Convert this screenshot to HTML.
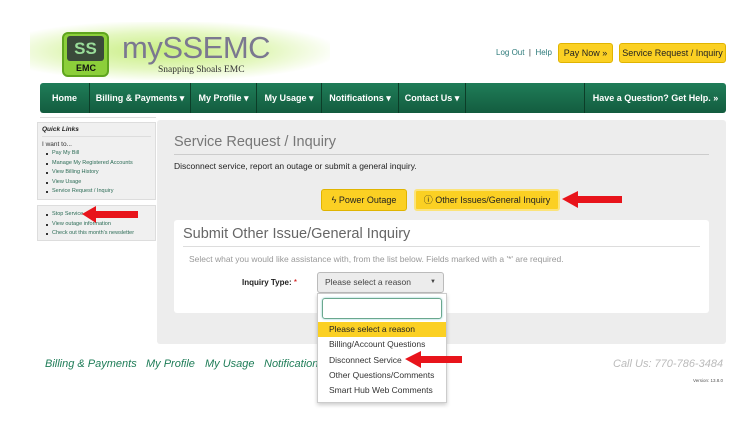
<!DOCTYPE html>
<html><head><meta charset="utf-8"><style>
*{box-sizing:border-box;margin:0;padding:0}
body{width:749px;height:421px;background:#fff;font-family:"Liberation Sans",sans-serif;position:relative;overflow:hidden}
.a{position:absolute}
.nav{left:40px;top:83px;width:686px;height:30px;background:linear-gradient(#1f7d58,#135c3f);border-radius:3px}
.nav span{position:absolute;top:0;height:30px;line-height:30px;color:#fff;font-weight:bold;font-size:9px;text-align:center}
.sep{position:absolute;top:0;width:1px;height:30px;background:#0c3d28}
.btn{background:#fbd023;border:1px solid #e0b400;border-radius:3px;font-size:9px;color:#222;text-align:center}
.lk{font-size:5.5px;color:#2b6b55;line-height:9.5px;padding-left:10px;position:relative}
.lk:before{content:"";position:absolute;left:4px;top:4px;width:2px;height:2px;background:#333}
.dd div{font-size:8.5px;color:#333;height:15.3px;line-height:15.3px;padding-left:11px}
.ft{font-size:11px;font-style:italic;color:#1f7d58}
</style></head><body>
<div class="a" style="left:30px;top:22px;width:300px;height:58px;background:radial-gradient(ellipse at 45% 50%,#c8ee80 0%,#e4f7c0 45%,#fff 75%)"></div>
<div class="a" style="left:62px;top:32px;width:47px;height:45px;background:#8ccf3a;border:2px solid #5fa51e;border-radius:6px"></div>
<div class="a" style="left:67px;top:36px;width:37px;height:25px;background:#3a4a3a;border-radius:3px;color:#9d9;font-weight:bold;font-size:17px;text-align:center;line-height:25px">SS</div>
<div class="a" style="left:66px;top:63px;width:40px;font-weight:bold;font-size:9px;color:#111;text-align:center">EMC</div>
<div class="a" style="left:122px;top:30px;font-size:31px;color:#7b7890;letter-spacing:-0.5px">mySSEMC</div>
<div class="a" style="left:158px;top:65px;font-size:9.5px;color:#333;font-family:'Liberation Serif',serif">Snapping Shoals EMC</div>
<div class="a" style="left:496px;top:48px;font-size:8px;color:#2d7a7a">Log Out <span style="color:#333">&nbsp;|&nbsp;</span> Help</div>
<div class="a btn" style="left:558px;top:43px;width:55px;height:20px;line-height:18px">Pay Now »</div>
<div class="a btn" style="left:619px;top:43px;width:107px;height:20px;line-height:18px">Service Request / Inquiry</div>
<div class="a nav">
<span style="left:0;width:49px">Home</span><div class="sep" style="left:49px"></div>
<span style="left:50px;width:100px">Billing &amp; Payments ▾</span><div class="sep" style="left:150px"></div>
<span style="left:151px;width:65px">My Profile ▾</span><div class="sep" style="left:216px"></div>
<span style="left:217px;width:64px">My Usage ▾</span><div class="sep" style="left:281px"></div>
<span style="left:282px;width:76px">Notifications ▾</span><div class="sep" style="left:358px"></div>
<span style="left:359px;width:66px">Contact Us ▾</span><div class="sep" style="left:425px"></div>
<div class="sep" style="left:544px"></div>
<span style="left:545px;width:141px">Have a Question? Get Help. »</span>
</div>
<div class="a" style="left:40px;top:117px;width:116px;height:1px;background:#ddd"></div>
<div class="a" style="left:37px;top:122px;width:119px;height:78px;background:#f0f0f0;border:1px solid #ddd;padding:3px 4px">
<div style="font-size:6.5px;font-weight:bold;font-style:italic;color:#222;border-bottom:1px solid #ddd;padding-bottom:3px;margin-bottom:4px">Quick Links</div>
<div style="font-size:6.5px;color:#333;margin-bottom:1px">I want to...</div>
<div class="lk">Pay My Bill</div><div class="lk">Manage My Registered Accounts</div><div class="lk">View Billing History</div><div class="lk">View Usage</div><div class="lk">Service Request / Inquiry</div>
</div>
<div class="a" style="left:37px;top:205px;width:119px;height:36px;background:#f0f0f0;border:1px solid #ddd;padding:4px 4px">
<div class="lk">Stop Service</div><div class="lk">View outage information</div><div class="lk">Check out this month's newsletter</div>
</div>
<div class="a" style="left:157px;top:120px;width:569px;height:224px;background:#ededed;border-radius:3px"></div>
<div class="a" style="left:174px;top:134px;font-size:14.5px;color:#777">Service Request / Inquiry</div>
<div class="a" style="left:174px;top:154px;width:535px;height:1px;background:#ccc"></div>
<div class="a" style="left:174px;top:161px;font-size:8.5px;color:#222">Disconnect service, report an outage or submit a general inquiry.</div>
<div class="a btn" style="left:321px;top:189px;width:86px;height:22px;line-height:20px">ϟ Power Outage</div>
<div class="a btn" style="left:414px;top:189px;width:146px;height:22px;line-height:18px;border:2px solid #fbe37a">ⓘ Other Issues/General Inquiry</div>
<div class="a" style="left:174px;top:220px;width:535px;height:93px;background:#fff;border-radius:3px"></div>
<div class="a" style="left:183px;top:226px;font-size:14.5px;color:#666">Submit Other Issue/General Inquiry</div>
<div class="a" style="left:183px;top:246px;width:517px;height:1px;background:#ddd"></div>
<div class="a" style="left:189px;top:254px;font-size:8.5px;color:#999">Select what you would like assistance with, from the list below. Fields marked with a '*' are required.</div>
<div class="a" style="left:242px;top:278px;font-size:8px;font-weight:bold;color:#222">Inquiry Type: <span style="color:#c00;font-weight:normal">*</span></div>
<div class="a" style="left:317px;top:272px;width:127px;height:21px;background:#ececec;border:1px solid #bbb;border-radius:3px;font-size:8.5px;color:#444;line-height:19px;padding-left:7px">Please select a reason<span style="position:absolute;right:7px;font-size:6px">▼</span></div>
<div class="a dd" style="left:317px;top:293px;width:130px;height:110px;background:#fff;border:1px solid #ccc;box-shadow:0 2px 4px rgba(0,0,0,.2)">
<div style="margin:4px 4px 3px;height:21px;border:1px solid #6aa88e;border-radius:3px;box-shadow:0 0 2px #8cc"></div>
<div style="background:#fbd023;color:#222">Please select a reason</div>
<div>Billing/Account Questions</div><div>Disconnect Service</div><div>Other Questions/Comments</div><div>Smart Hub Web Comments</div>
</div>
<div class="a ft" style="left:45px;top:358px">Billing &amp; Payments</div>
<div class="a ft" style="left:146px;top:358px">My Profile</div>
<div class="a ft" style="left:205px;top:358px">My Usage</div>
<div class="a ft" style="left:264px;top:358px;width:53px;overflow:hidden;white-space:nowrap">Notifications</div>
<div class="a" style="left:613px;top:358px;font-size:11px;font-style:italic;color:#bbb">Call Us: 770-786-3484</div>
<div class="a" style="left:693px;top:378px;font-size:4.5px;color:#555">Version: 13.8.0</div>
<svg class="a" style="left:0;top:0" width="749" height="421">
<g fill="#e8141b">
<polygon points="82,214 96,206 96,211 138,211 138,218 96,218 96,223"/>
<polygon points="562,199 578,191 578,196 622,196 622,203 578,203 578,208"/>
<polygon points="405,359 421,351 421,356 462,356 462,363 421,363 421,368"/>
</g></svg>
</body></html>
